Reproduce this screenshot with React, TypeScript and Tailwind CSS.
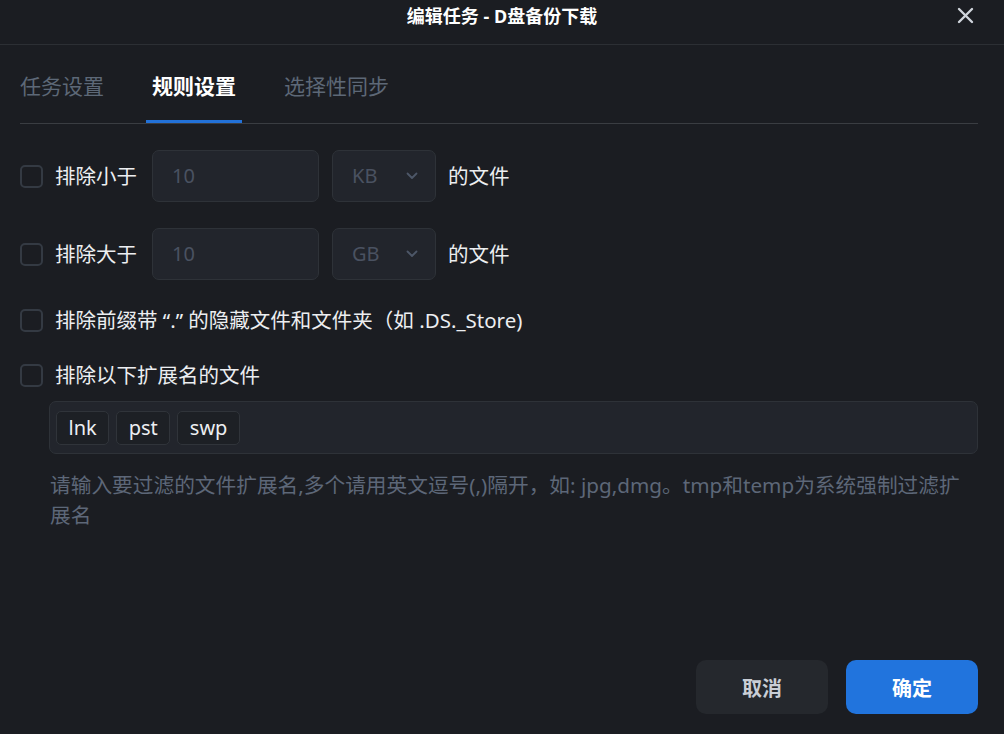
import React from "react";

const font = { fontFamily: '"Noto Sans", "Noto Sans CJK SC", sans-serif' };

function Checkbox() {
  return <div className="w-[23px] h-[23px] shrink-0 rounded-[5px] border-2 border-[#343a43]" />;
}

function Chevron() {
  return (
    <svg width="12" height="8" viewBox="0 0 12 8" fill="none">
      <path d="M1.5 1.5 L6 6 L10.5 1.5" stroke="#4d5768" strokeWidth="1.8" strokeLinecap="round" strokeLinejoin="round" />
    </svg>
  );
}

function SizeRow({ label, unit }: { label: string; unit: string }) {
  return (
    <div className="flex items-center h-[52px]">
      <Checkbox />
      <span className="ml-[12px] text-[20.5px] leading-[30px] text-[#eceef1]">{label}</span>
      <div className="ml-[15px] w-[167px] h-[52px] rounded-[7px] bg-[#22252c] border border-[#2e3238] flex items-center pl-[19px] text-[20px] text-[#4a5261]">
        10
      </div>
      <div className="ml-[13px] w-[104px] h-[52px] rounded-[7px] bg-[#22252c] border border-[#2e3238] flex items-center pl-[19px] pr-[17px] justify-between text-[20px] text-[#4a5261]">
        <span>{unit}</span>
        <Chevron />
      </div>
      <span className="ml-[12px] text-[20.5px] leading-[30px] text-[#eceef1]">的文件</span>
    </div>
  );
}

export default function App() {
  return (
    <div style={font} className="w-[1004px] h-[734px] bg-[#1b1d22] flex flex-col overflow-hidden">
      <div className="relative h-[45px] shrink-0 border-b border-[#2c2f34] flex items-center justify-center">
        <span className="text-[18px] font-bold text-white -mt-[12px]">编辑任务 - D盘备份下载</span>
        <svg className="absolute right-[30px] top-[7px]" width="17" height="17" viewBox="0 0 17 17" fill="none">
          <path d="M2 2 L15 15 M15 2 L2 15" stroke="#d0d5dc" strokeWidth="2.4" strokeLinecap="round" />
        </svg>
      </div>
      <div className="pl-[20px] pr-[26px] flex flex-col flex-1">
        <div className="border-b border-[#3a3d42] h-[79px] shrink-0">
          <div className="flex -ml-[6px] gap-[36px] h-full">
            <div className="px-[6px] pt-[26px] text-[21px] leading-[30px] text-[#5d6877]">任务设置</div>
            <div className="relative px-[6px] pt-[26px] text-[21px] leading-[30px] text-white font-bold">
              规则设置
              <span className="absolute left-0 right-0 bottom-0 h-[3px] bg-[#2271d8]" />
            </div>
            <div className="px-[6px] pt-[26px] text-[21px] leading-[30px] text-[#5d6877]">选择性同步</div>
          </div>
        </div>
        <div className="mt-[26px]">
          <SizeRow label="排除小于" unit="KB" />
        </div>
        <div className="mt-[26px]">
          <SizeRow label="排除大于" unit="GB" />
        </div>
        <div className="mt-[25px] flex items-center h-[30px]">
          <Checkbox />
          <span className="ml-[12px] text-[20.5px] leading-[30px] text-[#eceef1]">排除前缀带 “.” 的隐藏文件和文件夹（如 .DS._Store)</span>
        </div>
        <div className="mt-[25px] flex items-center h-[30px]">
          <Checkbox />
          <span className="ml-[12px] text-[20.5px] leading-[30px] text-[#eceef1]">排除以下扩展名的文件</span>
        </div>
        <div className="ml-[29px] mt-[11px] h-[53px] rounded-[7px] bg-[#22252c] border border-[#2e3238] flex items-start pt-[9px] pl-[6px] gap-[7px]">
          {["lnk", "pst", "swp"].map((t) => (
            <div key={t} className="h-[34px] px-[11.5px] rounded-[5px] bg-[#1d2025] border border-[#30343a] flex items-center text-[20px] text-[#eceef1]">
              {t}
            </div>
          ))}
        </div>
        <div className="ml-[30px] mt-[16px] text-[20.7px] leading-[30px] text-[#5d6778]">
          请输入要过滤的文件扩展名,多个请用英文逗号(,)隔开，如: jpg,dmg。tmp和temp为系统强制过滤扩展名
        </div>
        <div className="mt-auto flex justify-end gap-[18px] pb-[20px]">
          <button className="w-[132px] h-[54px] pt-[3px] rounded-[10px] bg-[#25282d] text-[20px] font-bold text-[#c9ced6]">取消</button>
          <button className="w-[132px] h-[54px] pt-[3px] rounded-[10px] bg-[#2174dd] text-[20px] font-bold text-white">确定</button>
        </div>
      </div>
    </div>
  );
}
